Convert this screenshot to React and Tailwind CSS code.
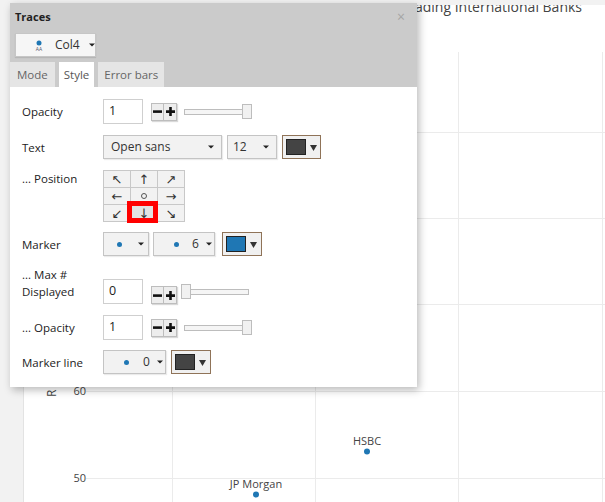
import React from 'react';

const font = { fontFamily: '"Open Sans", "Liberation Sans", sans-serif' };

const Caret = () => (
  <svg width="6" height="4" viewBox="0 0 6 4" className="shrink-0">
    <path d="M0 0.5h6L3 3.5z" fill="#222" />
  </svg>
);

const Dot = () => <span className="block h-[5px] w-[5px] shrink-0 rounded-full bg-[#1f77b4]" />;

const Select = ({ className = '', children }) => (
  <div className={`flex h-[24px] items-center border border-[#c4c4c4] bg-[#f2f2f2] text-[12px] text-[#333] shadow-[1px_1px_1px_rgba(0,0,0,0.08)] ${className}`}>
    {children}
  </div>
);

const Swatch = ({ color, className = '' }) => (
  <div className={`flex h-[24px] items-center border border-[#8f7358] bg-[#f0f0f0] pl-[3px] ${className}`}>
    <span className="block h-[16px] w-[20px] border border-[#222]" style={{ background: color }} />
    <svg width="7" height="7" viewBox="0 0 7 7" className="ml-[4px]">
      <path d="M0 1h7L3.5 7z" fill="#333" />
    </svg>
  </div>
);

const PlusMinus = () => (
  <div className="ml-[8px] flex h-[18px] shadow-[1px_1px_1px_rgba(0,0,0,0.15)]">
    <div className="flex w-[13px] items-center justify-center border border-[#bdbdbd] bg-[#ededed]">
      <svg width="9" height="9" viewBox="0 0 9 9"><path d="M0 3.3h9v2.6H0z" fill="#111" /></svg>
    </div>
    <div className="flex w-[13px] items-center justify-center border-y border-r border-[#bdbdbd] bg-[#ededed]">
      <svg width="9" height="9" viewBox="0 0 9 9"><path d="M0 3.3h9v2.6H0zM3.2 0h2.6v9H3.2z" fill="#111" /></svg>
    </div>
  </div>
);

const Slider = ({ left = false, className = '' }) => (
  <div className={`relative flex h-[15px] w-[68px] items-center ${className}`}>
    <div className="h-[6px] w-full border border-[#bdbdbd] bg-[#f5f5f5]" />
    <div className={`absolute top-0 h-[15px] w-[10px] border border-[#bdbdbd] bg-[#f1f1f1] ${left ? 'left-0' : 'right-0'}`} />
  </div>
);

const NumInput = ({ value }) => (
  <div className="flex h-[25px] w-[40px] items-center border border-[#cfcfcf] bg-white pl-[5px] text-[12.5px] text-[#222]">
    {value}
  </div>
);

const Label = ({ children, className = '' }) => (
  <div className={`w-[81px] shrink-0 text-[11.5px] leading-[17px] text-[#222] ${className}`}>{children}</div>
);

const arrows = ['↖', '↑', '↗', '←', '○', '→', '↙', '↓', '↘'];

const PositionGrid = () => (
  <div className="grid grid-cols-[repeat(3,26px)] grid-rows-[repeat(3,16px)] gap-px border border-[#c8c8c8] bg-[#c8c8c8]">
    {arrows.map((a, i) => (
      <div
        key={i}
        className={`relative flex items-center justify-center text-[13px] leading-none text-[#333] ${i === 7 ? 'bg-[#e2e2e2]' : 'bg-[#f2f2f2]'}`}
        style={{ fontFamily: '"DejaVu Sans", sans-serif' }}
      >
        {i === 4 ? <span className="block h-[6px] w-[6px] rounded-full border border-[#555]" /> : a}
        {i === 7 && <div className="absolute -bottom-[2px] -left-[4px] -right-[1px] -top-[4px] z-10 border-[5px] border-[#ff0000]" />}
      </div>
    ))}
  </div>
);

const Chart = () => (
  <div className="ml-[23px] mt-[5px] h-[497px] w-[582px] border-l border-[#e3e3e3] bg-white">
    <svg width="581" height="497" viewBox="0 0 581 497" style={font}>
      <text x="558" y="7" fontSize="14" fill="#444" textAnchor="end">Leading International Banks</text>
      {[148, 291, 434, 578].map((x) => (
        <line key={x} x1={x + 0.5} x2={x + 0.5} y1="47" y2="497" stroke="#ebebeb" />
      ))}
      {[127, 213, 299, 386, 473].map((y) => (
        <line key={y} x1="62" x2="581" y1={y + 0.5} y2={y + 0.5} stroke="#ebebeb" />
      ))}
      <text x="62" y="390" fontSize="11" fill="#444" textAnchor="end">60</text>
      <text x="62" y="477" fontSize="11" fill="#444" textAnchor="end">50</text>
      <text x="32" y="392" fontSize="12" fill="#444" transform="rotate(-90 32 392)">
        R<tspan dx="4">eturn on Equity (%)</tspan>
      </text>
      <text x="343" y="440" fontSize="11" fill="#444" textAnchor="middle">HSBC</text>
      <circle cx="343" cy="446.5" r="3" fill="#1f77b4" />
      <text x="232" y="483" fontSize="11" fill="#444" textAnchor="middle">JP Morgan</text>
      <circle cx="232" cy="489.5" r="3" fill="#1f77b4" />
    </svg>
  </div>
);

const TracesPanel = () => (
  <div className="absolute left-[10px] top-[3px] flex h-[384px] w-[407px] flex-col bg-white shadow-[2px_3px_8px_rgba(0,0,0,0.28)]">
    <div className="bg-[#cbcbcb]">
      <div className="mt-[1px] flex h-[26px] items-center justify-between pl-[5px] pr-[12px]">
        <span className="text-[11px] font-bold text-[#222]">Traces</span>
        <span className="text-[14px] leading-none text-[#a5a5a5]">×</span>
      </div>
      <div className="ml-[5px] mt-[3px] flex h-[24px] w-[81px] items-center border border-[#c6c6c6] bg-[#f6f6f6] shadow-[0_1px_1px_rgba(0,0,0,0.1)]">
        <svg width="10" height="12" viewBox="0 0 10 12" className="ml-[18px]">
          <circle cx="5" cy="4" r="2.5" fill="#1f77b4" />
          <text x="5" y="11.5" fontSize="5" fill="#556" textAnchor="middle">AA</text>
        </svg>
        <span className="ml-[11px] text-[12px] text-[#333]">Col4</span>
        <span className="ml-[9px]"><Caret /></span>
      </div>
      <div className="mt-[5px] flex h-[25px] gap-[4px] text-[11.5px]">
        <div className="flex items-center bg-[#e5e5e5] px-[7px] text-[#666]">Mode</div>
        <div className="flex items-center bg-white px-[5px] text-[#555]">Style</div>
        <div className="flex items-center bg-[#e5e5e5] px-[6px] text-[#666]">Error bars</div>
      </div>
    </div>

    <div className="flex flex-col gap-[10px] px-[12px] pt-[12px]">
      <div className="flex h-[25px] items-center">
        <Label>Opacity</Label>
        <NumInput value="1" />
        <PlusMinus />
        <Slider className="ml-[7px]" />
      </div>

      <div className="mt-[1px] flex h-[24px] items-center">
        <Label>Text</Label>
        <Select className="w-[119px] justify-between pl-[7px] pr-[7px]">
          <span>Open sans</span>
          <Caret />
        </Select>
        <Select className="ml-[5px] w-[50px] justify-between pl-[5px] pr-[7px]">
          <span>12</span>
          <Caret />
        </Select>
        <Swatch color="#444444" className="ml-[5px] w-[39px]" />
      </div>

      <div className="mt-[1px] flex items-start">
        <Label className="leading-[14px]">... Position</Label>
        <PositionGrid />
      </div>

      <div className="flex h-[24px] items-center">
        <Label>Marker</Label>
        <Select className="w-[46px] pl-[13px]">
          <Dot />
          <span className="ml-[16px]"><Caret /></span>
        </Select>
        <Select className="ml-[4px] w-[62px] pl-[20px]">
          <Dot />
          <span className="ml-[13px]">6</span>
          <span className="ml-[7px]"><Caret /></span>
        </Select>
        <Swatch color="#1f77b4" className="ml-[7px] w-[40px]" />
      </div>

      <div className="flex h-[38px] items-end">
        <Label className="pb-[4px]">... Max #<br />Displayed</Label>
        <NumInput value="0" />
        <PlusMinus />
        <Slider left className="mb-[5px] ml-[4px]" />
      </div>

      <div className="mt-[1px] flex h-[25px] items-center">
        <Label>... Opacity</Label>
        <NumInput value="1" />
        <PlusMinus />
        <Slider className="ml-[7px]" />
      </div>

      <div className="flex h-[24px] items-center">
        <Label>Marker line</Label>
        <Select className="w-[63px] pl-[20px]">
          <Dot />
          <span className="ml-[14px]">0</span>
          <span className="ml-[7px]"><Caret /></span>
        </Select>
        <Swatch color="#444444" className="ml-[5px] w-[40px]" />
      </div>
    </div>
  </div>
);

export default function App() {
  return (
    <div className="relative h-[502px] w-[605px] overflow-hidden bg-[#f2f2f2]" style={font}>
      <Chart />
      <TracesPanel />
    </div>
  );
}
